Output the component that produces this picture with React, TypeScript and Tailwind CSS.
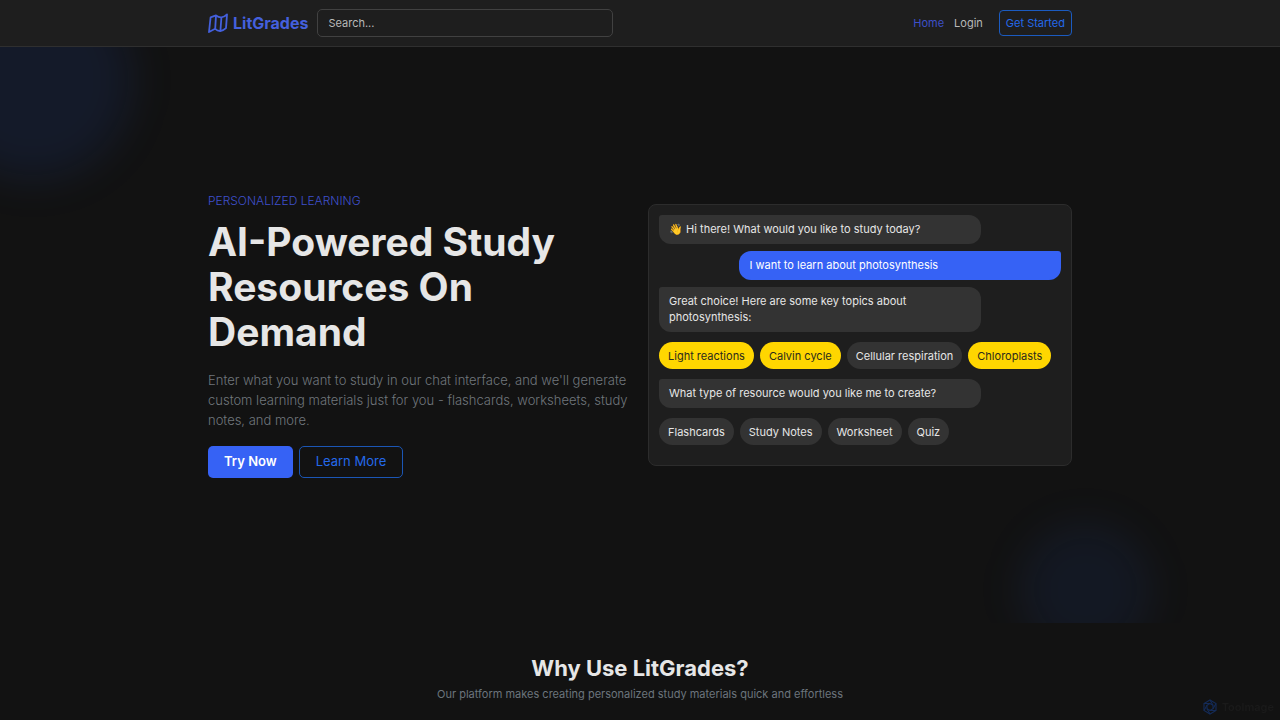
import clsx from "clsx";

interface Chip {
  label: string;
  active?: boolean;
}

const topics: Chip[] = [
  { label: "Light reactions", active: true },
  { label: "Calvin cycle", active: true },
  { label: "Cellular respiration" },
  { label: "Chloroplasts", active: true },
];

const resources: Chip[] = [
  { label: "Flashcards" },
  { label: "Study Notes" },
  { label: "Worksheet" },
  { label: "Quiz" },
];

const MapLogo = () => (
  <svg
    viewBox="0 0 20 20"
    className="size-5"
    fill="none"
    stroke="currentColor"
    strokeWidth="1.8"
    strokeLinejoin="round"
    aria-hidden="true"
  >
    <path d="M2.6 4.4 8 2.4q2.6 2.2 5.4 2t5.6-3L18 15.2q-2.8 2.6-5.6 2.8t-5.2-2.2L1 19z" />
    <path d="M8 2.4 7.2 15.8M13.4 4.4l-1 13.6" />
  </svg>
);

const WatermarkLogo = () => (
  <svg
    viewBox="0 0 16 16"
    className="size-4"
    fill="none"
    stroke="currentColor"
    strokeWidth="1.1"
    aria-hidden="true"
  >
    <path d="M8 1l6 3.5v7L8 15l-6-3.5v-7z" />
    <path d="M8 4.5l3 1.75v3.5L8 11.5l-3-1.75v-3.5z" />
    <path d="M8 1l3 5.25M14 4.5l-3 5.25M14 11.5H8M8 15l-3-5.25M2 11.5l3-5.25M2 4.5h6" />
  </svg>
);

const Header = () => (
  <header className="relative z-10 border-b border-[#2f2f2f] bg-[#1e1e1e]">
    <div className="mx-auto flex h-[46px] max-w-[864px] items-center">
      <a
        href="#"
        className="flex items-center gap-[5px] text-base font-bold text-[#4460dd]"
      >
        <MapLogo />
        LitGrades
      </a>
      <input
        type="search"
        aria-label="Search"
        placeholder="Search..."
        className="ml-[9px] h-7 w-[296px] rounded-[5px] border border-[#414141] bg-[#1e1e1e] px-[10px] text-[11px] text-[#e0e0e0] placeholder:text-[#b9b9b9]"
      />
      <nav className="ml-auto flex items-center text-[11px]">
        <a href="#" className="mr-[10px] text-[#3d50c8]">
          Home
        </a>
        <a href="#" className="mr-4 text-[#b9b9b9]">
          Login
        </a>
        <a
          href="#"
          className="flex h-[26px] items-center rounded border border-[#1b5bc0] px-[6px] text-[#2469ea]"
        >
          Get Started
        </a>
      </nav>
    </div>
  </header>
);

const Bubble = ({ text, mine = false }: { text: string; mine?: boolean }) => (
  <div
    className={clsx(
      "w-4/5 px-[10px] pt-[6px] pb-[7px]",
      mine
        ? "ml-auto rounded-xl rounded-tr-[3px] bg-[#3662f5] text-white"
        : "rounded-xl rounded-tl-[3px] bg-[#333333]",
    )}
  >
    {text}
  </div>
);

const Chips = ({ items }: { items: Chip[] }) => (
  <div className="flex flex-wrap gap-[6px]">
    {items.map((item) => (
      <button
        key={item.label}
        type="button"
        className={clsx(
          "h-[27px] rounded-full px-[9px]",
          item.active ? "bg-[#ffd600] text-[#2b2b1c]" : "bg-[#333333]",
        )}
      >
        {item.label}
      </button>
    ))}
  </div>
);

const ChatPreview = () => (
  <div className="rounded-lg border border-[#2c2c2c] bg-[#1e1e1e] px-[10px] pt-[10px] pb-5 text-[11px] leading-4 text-[#e6e6e6]">
    <div className="flex flex-col gap-[7px]">
      <Bubble text="👋 Hi there! What would you like to study today?" />
      <Bubble mine text="I want to learn about photosynthesis" />
      <Bubble text="Great choice! Here are some key topics about photosynthesis:" />
    </div>
    <div className="mt-[10px] flex flex-col gap-[10px]">
      <Chips items={topics} />
      <Bubble text="What type of resource would you like me to create?" />
      <Chips items={resources} />
    </div>
  </div>
);

const Hero = () => (
  <section className="relative flex min-h-[80vh] items-center overflow-hidden">
    <div className="absolute -top-[67px] -left-[67px] size-[200px] rounded-full bg-[#2564f5]/10 blur-[20px]" />
    <div className="absolute right-[10%] -bottom-[33px] size-[133px] rounded-full bg-[#2564f5]/8 blur-[20px]" />
    <div className="relative mx-auto grid w-full max-w-[864px] grid-cols-2 items-center gap-4">
      <div>
        <p className="mb-[10px] text-xs leading-4 font-light text-[#3f50cc] uppercase">
          Personalized Learning
        </p>
        <h1 className="mb-4 text-[39px] leading-[45px] font-bold text-[#e6e6e6]">
          AI-Powered Study Resources On Demand
        </h1>
        <p className="mb-4 text-[13px] leading-5 font-light text-[#70767c]">
          Enter what you want to study in our chat interface, and we'll generate
          custom learning materials just for you - flashcards, worksheets, study
          notes, and more.
        </p>
        <div className="flex gap-[6px] text-[13px]">
          <button
            type="button"
            className="h-8 rounded-[5px] bg-[#3662f5] px-4 font-semibold text-white"
          >
            Try Now
          </button>
          <button
            type="button"
            className="h-8 rounded-[5px] border border-[#1b56b5] px-4 text-[#2469ea]"
          >
            Learn More
          </button>
        </div>
      </div>
      <ChatPreview />
    </div>
  </section>
);

export default function App() {
  return (
    <div className="min-h-screen bg-[#121212] font-['Inter',sans-serif]">
      <Header />
      <Hero />
      <section className="pt-8 text-center">
        <h2 className="text-[22px] leading-[26px] font-bold text-[#e6e6e6]">
          Why Use LitGrades?
        </h2>
        <p className="mt-[5px] text-[11px] leading-4 text-[#6c757d]">
          Our platform makes creating personalized study materials quick and
          effortless
        </p>
      </section>
      <div className="fixed right-[6px] bottom-[5px] flex items-center gap-1 text-[11px] font-semibold text-[#1a1a1a]">
        <span className="text-[#142b57]">
          <WatermarkLogo />
        </span>
        Toolmage
      </div>
    </div>
  );
}
